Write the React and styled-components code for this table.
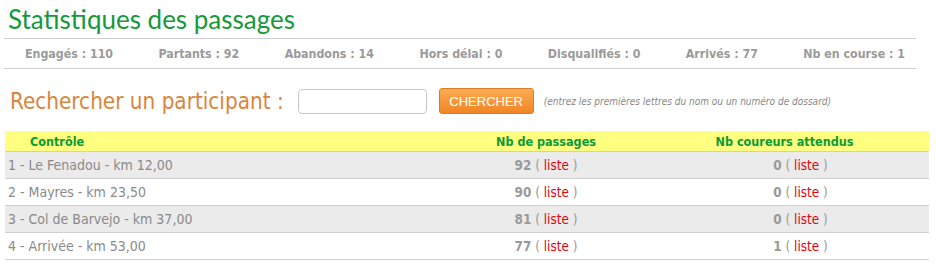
import React from "react";
import styled, { createGlobalStyle } from "styled-components";

const stats = [
    ["Engagés", 110],
    ["Partants", 92],
    ["Abandons", 14],
    ["Hors délai", 0],
    ["Disqualifiés", 0],
    ["Arrivés", 77],
    ["Nb en course", 1],
];

const rows = [
    { label: "1 - Le Fenadou - km 12,00", passages: 92, attendus: 0 },
    { label: "2 - Mayres - km 23,50", passages: 90, attendus: 0 },
    { label: "3 - Col de Barvejo - km 37,00", passages: 81, attendus: 0 },
    { label: "4 - Arrivée - km 53,00", passages: 77, attendus: 1 },
];

const App = () => {
    return (
        <>
            <GlobalStyle />
            <Page>
                <Title>Statistiques des passages</Title>
                <StatsBar>
                    {stats.map(([k, v]) => (
                        <Stat key={k}>{k} : {v}</Stat>
                    ))}
                </StatsBar>
                <SearchRow>
                    <SearchLabel>Rechercher un participant :</SearchLabel>
                    <SearchInput type="text" />
                    <SearchButton>CHERCHER</SearchButton>
                    <Hint>(entrez les premières lettres du nom ou un numéro de dossard)</Hint>
                </SearchRow>
                <Table>
                    <HeadRow>
                        <HeadCell $first>Contrôle</HeadCell>
                        <HeadCell>Nb de passages</HeadCell>
                        <HeadCell $last>Nb coureurs attendus</HeadCell>
                    </HeadRow>
                    {rows.map((r, i) => (
                        <Row key={i} $odd={i % 2 === 0}>
                            <LabelCell>{r.label}</LabelCell>
                            <CountCell>
                                <b>{r.passages}</b> ( <Liste>liste</Liste> )
                            </CountCell>
                            <CountCell $last>
                                <b>{r.attendus}</b> ( <Liste>liste</Liste> )
                            </CountCell>
                        </Row>
                    ))}
                </Table>
            </Page>
        </>
    );
};

export default App;

const GlobalStyle = createGlobalStyle`
    body {
        margin: 0;
        background: #fff;
        font-family: "DejaVu Sans Condensed", "DejaVu Sans", sans-serif;
    }
`;

const Page = styled.div`
    width: 936px;
    padding: 4px 0 0 4px;
    box-sizing: border-box;
`;

const Title = styled.h1`
    margin: 0 0 0 4px;
    height: 34px;
    font-family: Lato, "Open Sans", sans-serif;
    font-weight: 400;
    font-size: 26px;
    line-height: 30px;
    color: #16993a;
`;

const StatsBar = styled.div`
    width: 912px;
    height: 29px;
    box-sizing: content-box;
    padding: 0 11px 0 21px;
    margin-left: -0px;
    border-top: 1px solid #cfcfcf;
    border-bottom: 1px solid #cfcfcf;
    display: flex;
    justify-content: space-between;
    align-items: center;
    width: 880px;
`;

const Stat = styled.span`
    font-size: 12.3px;
    font-weight: bold;
    color: #9a9a9a;
`;

const SearchRow = styled.div`
    display: flex;
    align-items: center;
    height: 62px;
    padding: 2px 0 0 6px;
    box-sizing: border-box;
`;

const SearchLabel = styled.span`
    font-size: 22.3px;
    color: #d9853b;
    margin-right: 14px;
`;

const SearchInput = styled.input`
    width: 129px;
    height: 25px;
    box-sizing: border-box;
    border: 1px solid #c8c8c8;
    border-radius: 4px;
    margin-right: 12px;
`;

const SearchButton = styled.button`
    width: 95px;
    height: 26px;
    border: 1px solid #df7a25;
    border-radius: 3px;
    background: linear-gradient(#fbac55, #f08523);
    color: #fff;
    font-family: "Liberation Sans", Arial, sans-serif;
    font-size: 13px;
    padding: 0;
    margin-right: 10px;
`;

const Hint = styled.span`
    font-size: 10px;
    font-style: italic;
    color: #888;
`;

const Table = styled.div`
    width: 924px;
    margin-left: 1px;
`;

const HeadRow = styled.div`
    display: grid;
    grid-template-columns: 425px 232px 1fr;
    height: 20px;
    background: #ffff80;
    border-bottom: 1px solid #cfcfcf;
    align-items: center;
`;

const HeadCell = styled.div`
    font-size: 12.5px;
    font-weight: bold;
    color: #0c9a34;
    text-align: ${(p) => (p.$first ? "left" : "center")};
    padding-left: ${(p) => (p.$first ? "25px" : "0")};
    padding-right: ${(p) => (p.$last ? "22px" : "0")};
`;

const Row = styled.div`
    display: grid;
    grid-template-columns: 425px 232px 1fr;
    height: 26px;
    align-items: center;
    background: ${(p) => (p.$odd ? "#ebebeb" : "#fff")};
    border-bottom: 1px solid #cfcfcf;
`;

const LabelCell = styled.div`
    font-size: 14px;
    color: #8a8a8a;
    padding-left: 3px;
`;

const CountCell = styled.div`
    font-size: 13.4px;
    color: #999;
    text-align: center;
    padding-left: ${(p) => (p.$last ? "10px" : "0")};

    b {
        color: #9a9a9a;
    }
`;

const Liste = styled.span`
    color: #e8000b;
`;
